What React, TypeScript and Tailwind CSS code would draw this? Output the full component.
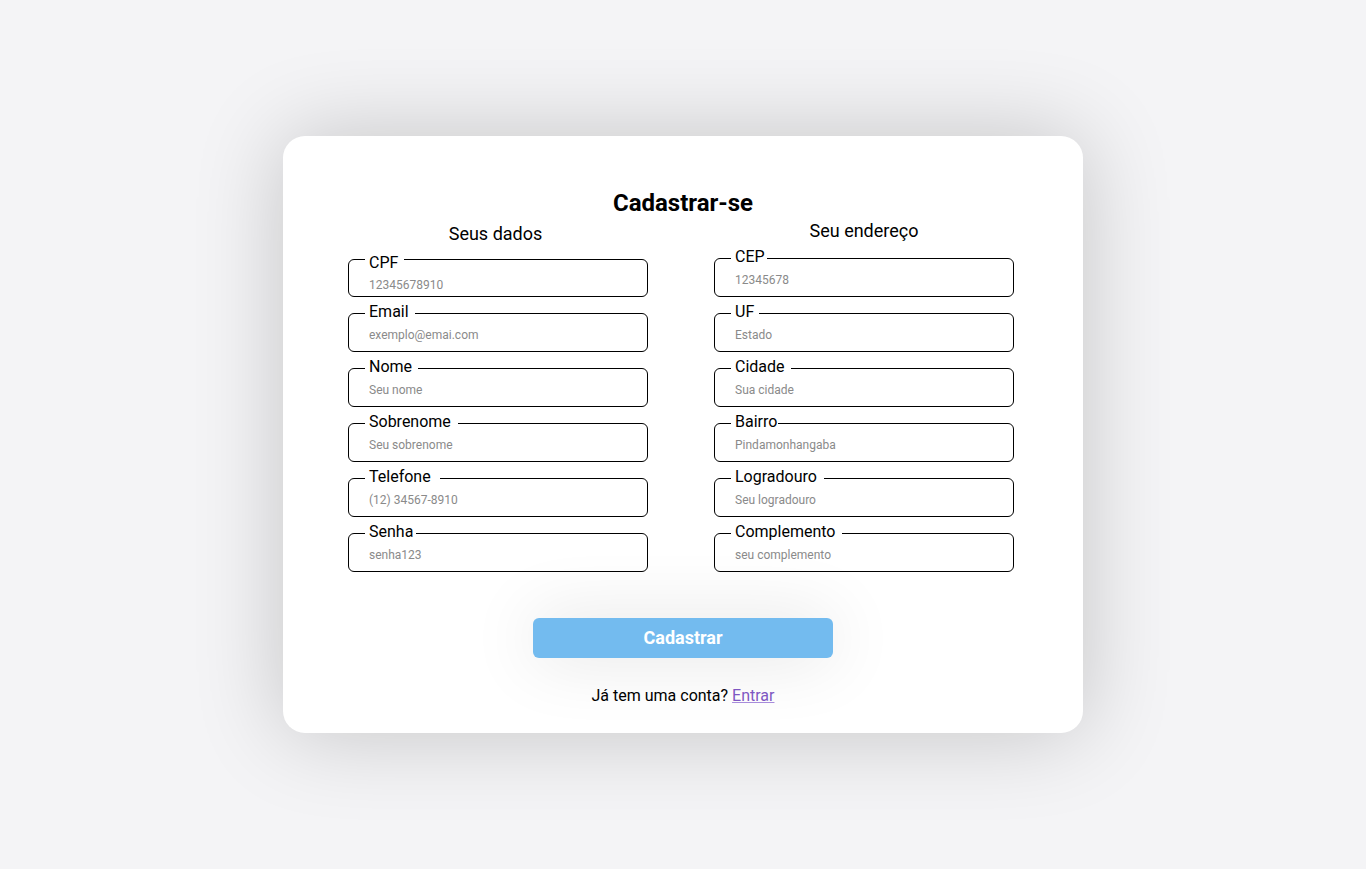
import React from 'react';

type Field = {
  label: string;
  placeholder: string;
  pad: string; // legend right padding, the gap after the label varies per field
};

const dados: Field[] = [
  { label: 'CPF', placeholder: '12345678910', pad: 'pr-[6px]' },
  { label: 'Email', placeholder: 'exemplo@emai.com', pad: 'pr-[6px]' },
  { label: 'Nome', placeholder: 'Seu nome', pad: 'pr-[6px]' },
  { label: 'Sobrenome', placeholder: 'Seu sobrenome', pad: 'pr-[7px]' },
  { label: 'Telefone', placeholder: '(12) 34567-8910', pad: 'pr-[9px]' },
  { label: 'Senha', placeholder: 'senha123', pad: 'pr-[3px]' },
];

const endereco: Field[] = [
  { label: 'CEP', placeholder: '12345678', pad: 'pr-[2px]' },
  { label: 'UF', placeholder: 'Estado', pad: 'pr-[5px]' },
  { label: 'Cidade', placeholder: 'Sua cidade', pad: 'pr-[6px]' },
  { label: 'Bairro', placeholder: 'Pindamonhangaba', pad: 'pr-[1px]' },
  { label: 'Logradouro', placeholder: 'Seu logradouro', pad: 'pr-[7px]' },
  { label: 'Complemento', placeholder: 'seu complemento', pad: 'pr-[7px]' },
];

// the first field (CPF) sits a little lower inside its box than the others
function InputField({ field, low }: { field: Field; low?: boolean }) {
  return (
    <fieldset
      className={
        low
          ? 'border border-black rounded-[6px] px-4 pb-[3px] m-0 min-w-0'
          : 'border border-black rounded-[6px] px-4 pb-[8px] m-0 min-w-0'
      }
    >
      <legend
        className={
          low
            ? `pl-1 pt-[7px] text-base leading-[19px] text-black ${field.pad}`
            : `pl-1 pb-[3px] text-base leading-[19px] text-black ${field.pad}`
        }
      >
        {field.label}
      </legend>
      <input
        type="text"
        placeholder={field.placeholder}
        className={
          low
            ? 'block w-full mt-[5px] px-1 h-4 text-xs leading-4 bg-transparent outline-none placeholder:text-[#8a8a8a]'
            : 'block w-full mt-[3px] px-1 h-4 text-xs leading-4 bg-transparent outline-none placeholder:text-[#8a8a8a]'
        }
      />
    </fieldset>
  );
}

export default function App() {
  return (
    <div
      className="min-h-screen w-full flex items-center justify-center bg-[#f4f4f6]"
      style={{ fontFamily: 'Roboto, "Noto Sans", sans-serif' }}
    >
      <div className="w-[800px] bg-white rounded-[22px] shadow-[0_0_90px_rgba(0,0,0,0.2)] pt-[53px] pb-[25px] flex flex-col items-center">
        <h1 className="text-2xl leading-7 font-bold text-black">Cadastrar-se</h1>

        <div className="w-full pl-[65px] grid grid-cols-[300px_300px] gap-x-[66px] items-start">
          {/* coluna esquerda */}
          <div className="flex flex-col">
            <h2 className="mt-[6px] pr-[5px] text-lg leading-[22px] text-center text-black">Seus dados</h2>
            <div className="mt-[1px] flex flex-col gap-[5px]">
              {dados.map((f, i) => (
                <InputField key={f.label} field={f} low={i === 0} />
              ))}
            </div>
          </div>

          {/* coluna direita */}
          <div className="flex flex-col">
            <h2 className="mt-[3px] text-lg leading-[22px] text-center text-black">Seu endereço</h2>
            <div className="mt-[5px] flex flex-col gap-[5px]">
              {endereco.map((f) => (
                <InputField key={f.label} field={f} />
              ))}
            </div>
          </div>
        </div>

        <button className="mt-[46px] w-[300px] h-10 rounded-[6px] bg-[#73bbef] text-white text-lg font-bold shadow-[0_0_70px_rgba(0,0,0,0.12)]">
          Cadastrar
        </button>

        <p className="mt-[26px] text-base leading-6 text-black">
          Já tem uma conta?{' '}
          <a href="#" className="text-[#7e57c2] underline decoration-[#a78bdb]">
            Entrar
          </a>
        </p>
      </div>
    </div>
  );
}
